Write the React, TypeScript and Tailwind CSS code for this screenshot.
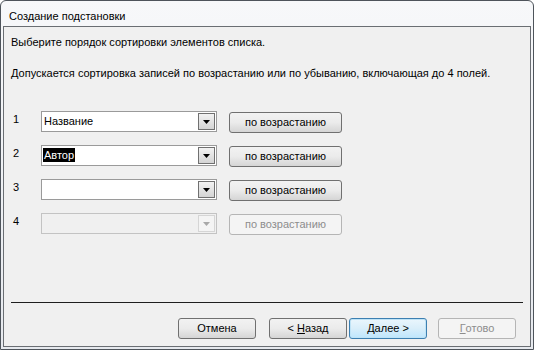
import React from 'react'

const font = { fontFamily: '"Liberation Sans", Arial, sans-serif' }

function Combo({ value, selected, disabled }: { value?: string; selected?: boolean; disabled?: boolean }) {
  return (
    <div
      className={`flex h-[21px] w-[176px] items-stretch border p-[1px] ${
        disabled ? 'border-[#c3c3c3] bg-[#f0f0f0]' : 'border-[#9a9a9a] bg-white'
      }`}
    >
      <div className="flex flex-1 items-start pt-[1px]">
        {value && (
          <span
            className={`px-[1px] text-[11px] leading-[14px] ${selected ? 'bg-black text-white' : 'text-black'}`}
          >
            {value}
          </span>
        )}
      </div>
      <div
        className={`flex w-[17px] items-center justify-center border ${
          disabled
            ? 'border-[#d5d5d5] bg-[#f4f4f4]'
            : 'border-[#707070] bg-gradient-to-b from-[#f2f2f2] to-[#d4d4d4]'
        }`}
      >
        <svg width="7" height="4" viewBox="0 0 7 4">
          <path d="M0 0h7L3.5 4z" fill={disabled ? '#a8a8a8' : '#000'} />
        </svg>
      </div>
    </div>
  )
}

function Btn({
  children,
  w = 'w-[78px]',
  disabled,
  primary,
}: {
  children: React.ReactNode
  w?: string
  disabled?: boolean
  primary?: boolean
}) {
  let cls = 'border-[#707070] bg-gradient-to-b from-[#f2f2f2] via-[#ebebeb] to-[#d5d5d5] text-black'
  if (disabled) cls = 'border-[#b5b5b5] bg-[#f4f4f4] text-[#8d8d8d]'
  if (primary)
    cls =
      'border-[#3c7fb1] bg-gradient-to-b from-[#eaf6fd] via-[#d9eefa] to-[#bee6fd] text-black shadow-[inset_0_0_0_1px_#bfe3f6]'
  return (
    <div
      className={`flex h-[21px] items-center justify-center rounded-[3px] border text-[11px] leading-none ${w} ${cls}`}
    >
      {children}
    </div>
  )
}

const rows = [
  { n: '1', value: 'Название' },
  { n: '2', value: 'Автор', selected: true },
  { n: '3' },
  { n: '4', disabled: true },
]

export default function App() {
  return (
    <div style={font} className="h-[350px] w-[534px] bg-white">
      <div className="flex h-full w-full flex-col rounded-t-[6px] border border-[#4e545b] bg-gradient-to-b from-[#f7f8fa] to-[#e6e9ee]">
        <div className="flex h-[25px] shrink-0 items-center pl-[8px] pt-[6px] text-[11px] text-black">
          Создание подстановки
        </div>
        <div className="flex flex-1 flex-col px-[2px] pb-[2px]">
          <div className="flex flex-1 flex-col border border-[#6a6e73] bg-[#f0f0f0] text-[11px] text-black">
            <div className="pl-[7px] pt-[8px] leading-[14px]">Выберите порядок сортировки элементов списка.</div>
            <div className="pl-[7px] pt-[17px] leading-[14px]">
              Допускается сортировка записей по возрастанию или по убыванию, включающая до 4 полей.
            </div>
            <div className="flex flex-col gap-[11px] pt-[30px]">
              {rows.map((r) => (
                <div key={r.n} className="flex items-center">
                  <div className="w-[37px] pb-[4px] pl-[9px] text-[11px] leading-none">{r.n}</div>
                  <Combo value={r.value} selected={r.selected} disabled={r.disabled} />
                  <div className="ml-[12px] mt-[2px]">
                    <Btn w="w-[113px]" disabled={r.disabled}>
                      по возрастанию
                    </Btn>
                  </div>
                </div>
              ))}
            </div>
            <div className="flex-1" />
            <div className="mx-[7px] border-t border-[#1e1e1e]" />
            <div className="flex items-center pb-[7px] pl-[174px] pt-[15px]">
              <Btn>Отмена</Btn>
              <div className="ml-[13px]">
                <Btn>
                  &lt;&nbsp;<span className="underline">Н</span>азад
                </Btn>
              </div>
              <div className="ml-[2px]">
                <Btn primary>
                  <span className="underline">Д</span>алее&nbsp;&gt;
                </Btn>
              </div>
              <div className="ml-[11px]">
                <Btn disabled>
                  <span className="underline">Г</span>отово
                </Btn>
              </div>
            </div>
          </div>
        </div>
      </div>
    </div>
  )
}
